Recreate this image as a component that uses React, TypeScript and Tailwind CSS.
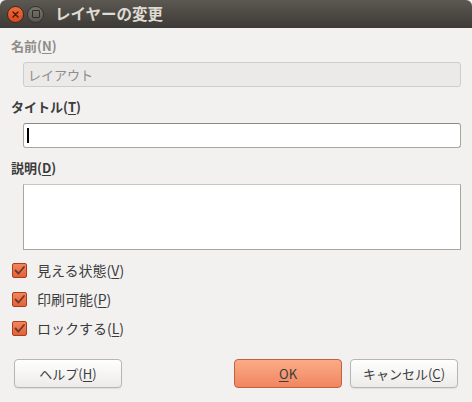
import React from "react";

const font = { fontFamily: '"Noto Sans CJK JP", "Noto Sans", sans-serif' };

function U({ c }: { c: string }) {
  return <span className="underline underline-offset-2">{c}</span>;
}

function Check({ label, k }: { label: string; k: string }) {
  return (
    <div className="flex items-center h-[29px]">
      <div className="ml-[12px] w-[15px] h-[15px] rounded-[2px] border border-[#a8401c] bg-gradient-to-b from-[#f5845a] to-[#e2623a] flex items-center justify-center">
        <svg width="13" height="13" viewBox="0 0 13 13">
          <path d="M2.5 6.5 L5.5 9.5 L11 3" fill="none" stroke="#6a3a2a" strokeWidth="1.8" strokeLinecap="round" strokeLinejoin="round" />
        </svg>
      </div>
      <span className="ml-[10px] text-[14px] text-[#3c3c3c]">
        {label}(<U c={k} />)
      </span>
    </div>
  );
}

export default function App() {
  return (
    <div className="w-[472px] h-[402px] bg-[#f2f1f0] flex flex-col overflow-hidden" style={font}>
      {/* Title bar */}
      <div className="h-[28px] rounded-tr-[6px] rounded-tl-[6px] bg-gradient-to-b from-[#5c5852] to-[#3d3b37] flex items-center">
        <div className="ml-[7px] w-[17px] h-[17px] rounded-full bg-gradient-to-b from-[#f26b3a] to-[#d9481d] border border-[#3a2a22] flex items-center justify-center">
          <svg width="9" height="9" viewBox="0 0 9 9">
            <path d="M2 2 L7 7 M7 2 L2 7" stroke="#4a1d10" strokeWidth="1.5" strokeLinecap="round" />
          </svg>
        </div>
        <div className="ml-[3px] w-[17px] h-[17px] rounded-full bg-gradient-to-b from-[#77736d] to-[#5a5752] border border-[#34322e] flex items-center justify-center">
          <div className="w-[8px] h-[8px] border-[1.5px] border-[#2e2c29] rounded-[1px]" />
        </div>
        <span className="ml-[11px] text-[15.5px] font-bold text-[#dfdbd2]">レイヤーの変更</span>
      </div>

      {/* Body */}
      <div className="flex flex-col px-[11px]">
        <div className="mt-[8px] h-[20px] text-[13px] font-bold text-[#8e8c88]">
          名前(<U c="N" />)
        </div>
        <div className="mt-[6px] ml-[12px] h-[25px] rounded-[3px] border border-[#cfcdca] bg-[#ebeae8] flex items-center px-[4px] text-[13px] text-[#8e8c88]">
          レイアウト
        </div>

        <div className="mt-[10px] h-[20px] text-[13px] font-bold text-[#3c3c3c]">
          タイトル(<U c="T" />)
        </div>
        <div className="mt-[6px] ml-[12px] h-[25px] rounded-[3px] border border-[#a8a6a2] border-t-[#8c8a86] bg-white flex items-center px-[3px]">
          <div className="w-[2px] h-[15px] bg-black" />
        </div>

        <div className="mt-[10px] h-[20px] text-[13px] font-bold text-[#3c3c3c]">
          説明(<U c="D" />)
        </div>
        <div className="mt-[6px] ml-[12px] h-[66px] border border-[#a8a6a2] border-t-[#c8c6c2] bg-white" />
      </div>

      <div className="mt-[6px] flex flex-col">
        <Check label="見える状態" k="V" />
        <Check label="印刷可能" k="P" />
        <Check label="ロックする" k="L" />
      </div>

      <div className="mt-[16px] flex items-center px-[14px]">
        <button className="w-[108px] h-[29px] rounded-[4px] border border-[#b8b6b2] bg-gradient-to-b from-white to-[#ecebe9] text-[13px] text-[#3c3c3c] shadow-[0_1px_1px_rgba(0,0,0,0.08)]">
          ヘルプ(<U c="H" />)
        </button>
        <div className="flex-1" />
        <button className="w-[108px] h-[29px] rounded-[4px] border border-[#c4603f] bg-gradient-to-b from-[#fbab88] to-[#f08660] text-[13px] text-[#3c3c3c]">
          <U c="O" />K
        </button>
        <button className="ml-[8px] w-[108px] h-[29px] rounded-[4px] border border-[#b8b6b2] bg-gradient-to-b from-white to-[#ecebe9] text-[13px] text-[#3c3c3c] shadow-[0_1px_1px_rgba(0,0,0,0.08)]">
          キャンセル(<U c="C" />)
        </button>
      </div>
    </div>
  );
}
